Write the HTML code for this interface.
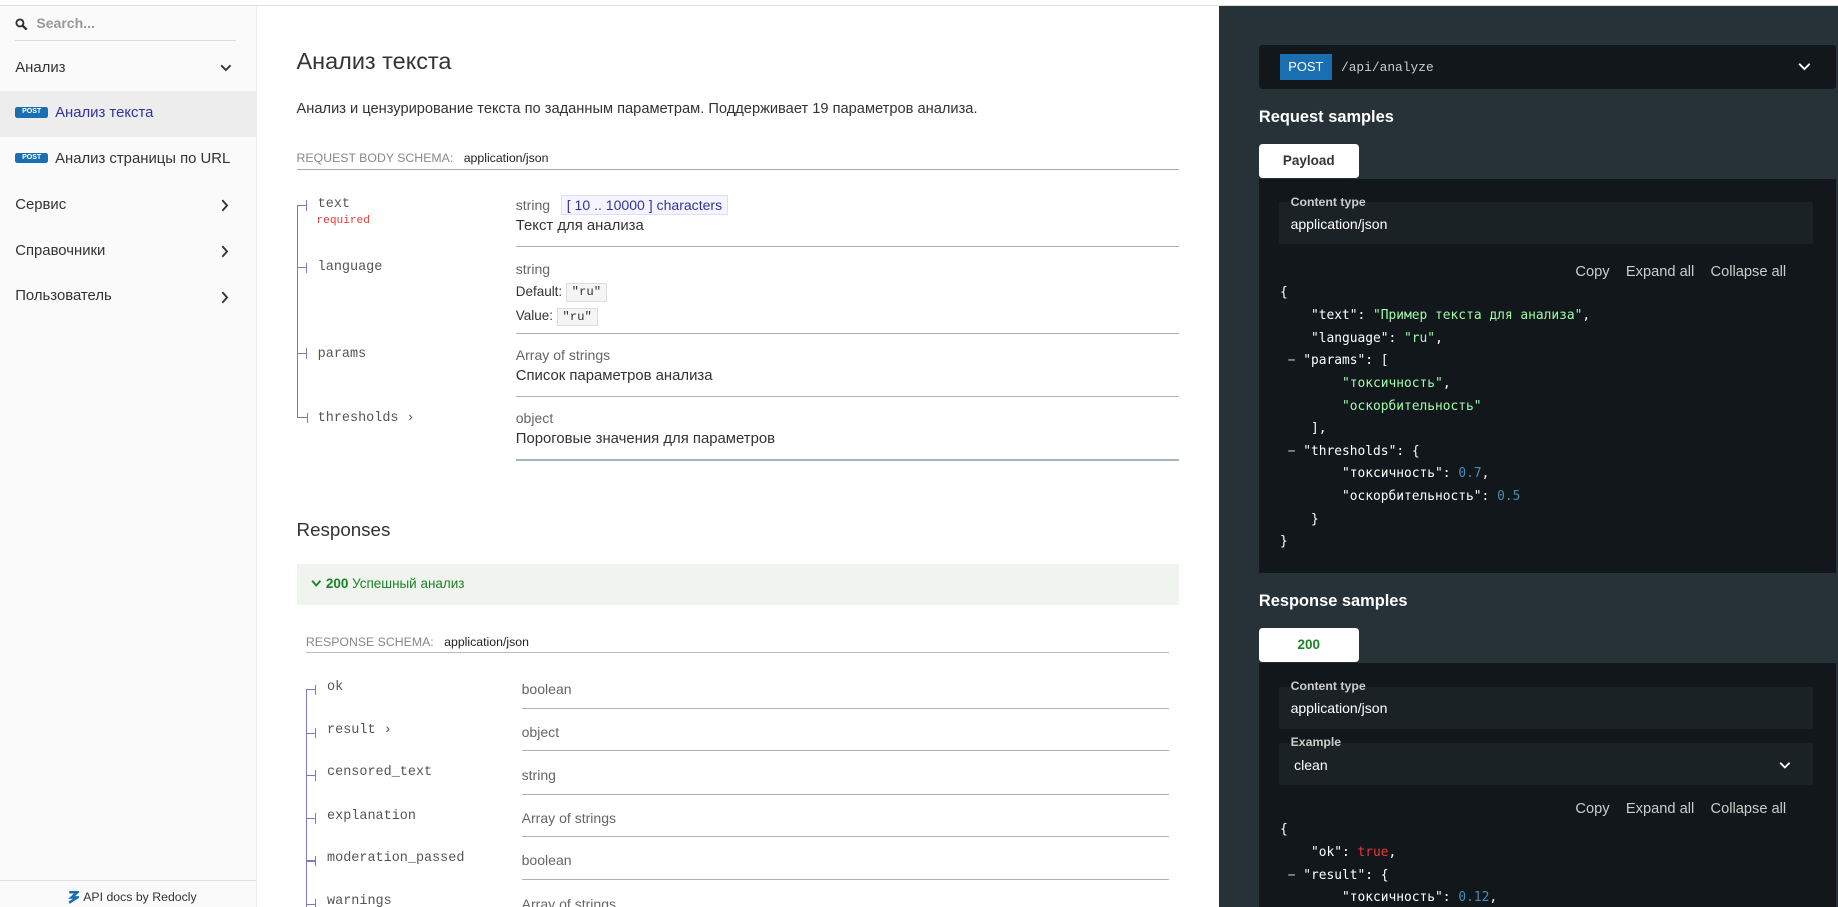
<!DOCTYPE html>
<html><head><meta charset="utf-8"><style>
html,body{margin:0;padding:0;overflow:hidden}
body{width:1568px;height:774px;zoom:1.17219;position:relative;font-family:"Liberation Sans","DejaVu Sans",sans-serif;background:#fff;color:#333}
.a{position:absolute}
.side{left:0;top:5px;width:218px;height:769px;background:#fafafa;border-right:1px solid #eee}
.mi{position:absolute;left:13px;font-size:12.7px;color:#333}
.chev{position:absolute;left:188px}
.post{display:inline-block;background:#1a6fb3;color:#fff;font-size:6px;font-weight:bold;width:28px;height:9px;line-height:9px;text-align:center;border-radius:2px;vertical-align:middle;margin-right:6px;position:relative;top:-1px}
.mid{left:218px;top:5px;width:822px;height:769px}
.mono{font-family:"Liberation Mono",monospace}
.fn{position:absolute;font-family:"Liberation Mono",monospace;font-size:11.5px;color:#555}
.ty{position:absolute;font-size:12px;color:#666}
.ds{position:absolute;font-size:12.7px;color:#333}
.hr{position:absolute;height:1px;background:#a6b3c0}
.tick{position:absolute;width:9px;height:1px;background:#7c7cbb}
.tick:after{content:"";position:absolute;right:0;top:-4px;width:1px;height:9px;background:#7c7cbb}
.right{left:1040px;top:5px;width:528px;height:769px;background:#263238}
.code{position:absolute;font-family:"DejaVu Sans Mono","Liberation Mono",monospace;font-size:11px;color:#fff;white-space:pre;line-height:19.3px}
.s{color:#a0fbaa}.n{color:#4a8bb3}.b{color:#e53935}.p{color:#ccc}
.btns{position:absolute;font-size:12.5px;color:#ccc}
</style></head><body>
<div class="a" style="left:0;top:0;width:1568px;height:4px;border-bottom:1px solid #e0e0e0;background:#fff"></div>

<div class="a side">
 <svg class="a" style="left:13px;top:10px" width="11" height="11" viewBox="0 0 11 11"><circle cx="4.2" cy="4.2" r="3" fill="none" stroke="#333" stroke-width="1.6"/><path d="M6.5 6.5L10 10" stroke="#333" stroke-width="2"/></svg>
 <div class="a" style="left:31px;top:8px;font-size:12px;font-weight:bold;color:#999">Search...</div>
 <div class="a" style="left:13px;top:29px;width:188px;height:1px;background:#ddd"></div>
 <div class="mi" style="top:46px">Анализ</div>
 <svg class="chev" style="top:49px" width="10" height="8" viewBox="0 0 10 8"><path d="M1 2l4 4 4-4" fill="none" stroke="#333" stroke-width="1.6"/></svg>
 <div class="a" style="left:0;top:73px;width:218px;height:39px;background:#ededed"></div>
 <div class="mi" style="top:85px;color:#32329f"><span class="post">POST</span>Анализ текста</div>
 <div class="mi" style="top:124px"><span class="post">POST</span>Анализ страницы по URL</div>
 <div class="mi" style="top:163px">Сервис</div>
 <svg class="chev" style="top:165px" width="8" height="11" viewBox="0 0 8 11"><path d="M2 1l4 4.5L2 10" fill="none" stroke="#333" stroke-width="1.6"/></svg>
 <div class="mi" style="top:202px">Справочники</div>
 <svg class="chev" style="top:204px" width="8" height="11" viewBox="0 0 8 11"><path d="M2 1l4 4.5L2 10" fill="none" stroke="#333" stroke-width="1.6"/></svg>
 <div class="mi" style="top:241px">Пользователь</div>
 <svg class="chev" style="top:243px" width="8" height="11" viewBox="0 0 8 11"><path d="M2 1l4 4.5L2 10" fill="none" stroke="#333" stroke-width="1.6"/></svg>
 <div class="a" style="left:0;top:746px;width:218px;height:1px;background:#e0e0e0"></div>
 <svg class="a" style="left:58px;top:755px" width="9" height="11" viewBox="0 0 9 11"><path d="M1 1h7L3 5.5h5L1 10" fill="none" stroke="#1a6fb3" stroke-width="2.2"/></svg>
 <div class="a" style="left:71px;top:754px;font-size:10.5px;color:#333">API docs by Redocly</div>
</div>

<div class="a mid">
 <div class="a" style="left:35px;top:36px;font-size:20px;color:#333">Анализ текста</div>
 <div class="a" style="left:35px;top:81px;font-size:12.5px;color:#333">Анализ и цензурирование текста по заданным параметрам. Поддерживает 19 параметров анализа.</div>
 <div class="a" style="left:35px;top:124px;font-size:10.5px;color:#888">REQUEST BODY SCHEMA: <span style="color:#222;margin-left:6px">application/json</span></div>
 <div class="a" style="left:35px;top:139px;width:753px;height:1px;background:#aaa"></div>

 <div class="a" style="left:35px;top:170px;width:1px;height:181px;background:#7c7cbb"></div>
 <div class="tick" style="left:35px;top:170px"></div><div class="fn" style="left:53px;top:163px">text</div>
 <div class="a mono" style="left:52px;top:178px;font-size:9.5px;color:#e53935">required</div>
 <div class="ty" style="left:222px;top:163px">string <span style="margin-left:6px;border:1px solid #ddf;background:#f5f5ff;color:#32329f;padding:1px 4px">[ 10 .. 10000 ] characters</span></div>
 <div class="ds" style="left:222px;top:181px">Текст для анализа</div>
 <div class="hr" style="left:222px;top:205px;width:566px"></div>

 <div class="tick" style="left:35px;top:223px"></div><div class="fn" style="left:53px;top:217px">language</div>
 <div class="ty" style="left:222px;top:218px">string</div>
 <div class="ds" style="left:222px;top:237px;font-size:11.5px">Default: <span class="mono" style="font-size:10.5px;background:#f5f5f5;border:1px solid #ddd;padding:1px 4px">"ru"</span></div>
 <div class="ds" style="left:222px;top:258px;font-size:11.5px">Value: <span class="mono" style="font-size:10.5px;background:#f5f5f5;border:1px solid #ddd;padding:1px 4px">"ru"</span></div>
 <div class="hr" style="left:222px;top:279px;width:566px"></div>

 <div class="tick" style="left:35px;top:296px"></div><div class="fn" style="left:53px;top:291px">params</div>
 <div class="ty" style="left:222px;top:291px">Array of strings</div>
 <div class="ds" style="left:222px;top:309px">Список параметров анализа</div>
 <div class="hr" style="left:222px;top:333px;width:566px"></div>

 <div class="a" style="left:35px;top:351px;width:9px;height:1px;background:#7c7cbb"></div>
 <div class="a" style="left:44px;top:347px;width:1px;height:9px;background:#7c7cbb"></div>
 <div class="fn" style="left:53px;top:345px">thresholds <span style="font-size:11px">›</span></div>
 <div class="ty" style="left:222px;top:345px">object</div>
 <div class="ds" style="left:222px;top:363px">Пороговые значения для параметров</div>
 <div class="hr" style="left:222px;top:387px;width:566px"></div>

 <div class="a" style="left:35px;top:438px;font-size:16px;color:#333">Responses</div>
 <div class="a" style="left:35px;top:476px;width:753px;height:35px;background:#eff5ee"></div>
 <svg class="a" style="left:47px;top:489px" width="9" height="7" viewBox="0 0 9 7"><path d="M1 1.5l3.5 4 3.5-4" fill="none" stroke="#1d8127" stroke-width="1.6"/></svg>
 <div class="a" style="left:60px;top:486px;font-size:11.5px;color:#1d8127"><b>200</b> Успешный анализ</div>
 <div class="a" style="left:43px;top:537px;font-size:10.5px;color:#888">RESPONSE SCHEMA: <span style="color:#222;margin-left:6px">application/json</span></div>
 <div class="a" style="left:43px;top:551px;width:736px;height:1px;background:#bbb"></div>

 <div class="a" style="left:43px;top:583px;width:1px;height:186px;background:#7c7cbb"></div>
 <div class="tick" style="left:43px;top:583px"></div><div class="fn" style="left:61px;top:575px">ok</div>
 <div class="ty" style="left:227px;top:576px">boolean</div><div class="hr" style="left:227px;top:599px;width:552px"></div>
 <div class="tick" style="left:43px;top:620px"></div><div class="fn" style="left:61px;top:612px">result <span>›</span></div>
 <div class="ty" style="left:227px;top:613px">object</div><div class="hr" style="left:227px;top:635px;width:552px"></div>
 <div class="tick" style="left:43px;top:656px"></div><div class="fn" style="left:61px;top:648px">censored_text</div>
 <div class="ty" style="left:227px;top:649px">string</div><div class="hr" style="left:227px;top:672px;width:552px"></div>
 <div class="tick" style="left:43px;top:693px"></div><div class="fn" style="left:61px;top:685px">explanation</div>
 <div class="ty" style="left:227px;top:686px">Array of strings</div><div class="hr" style="left:227px;top:708px;width:552px"></div>
 <div class="tick" style="left:43px;top:729px"></div><div class="fn" style="left:61px;top:721px">moderation_passed</div>
 <div class="ty" style="left:227px;top:722px">boolean</div><div class="hr" style="left:227px;top:745px;width:552px"></div>
 <div class="tick" style="left:43px;top:766px"></div><div class="fn" style="left:61px;top:758px">warnings</div>
 <div class="ty" style="left:227px;top:759px">Array of strings</div>
</div>

<div class="a right">
 <div class="a" style="left:34px;top:33px;width:492px;height:38px;background:#11171a;border-radius:3px"></div>
 <div class="a" style="left:52px;top:41px;width:44px;height:22px;background:#1a6fb3;color:#fff;font-size:11px;line-height:22px;text-align:center">POST</div>
 <div class="a mono" style="left:104px;top:46px;font-size:11px;color:#ccc">/api/analyze</div>
 <svg class="a" style="left:494px;top:48px" width="11" height="8" viewBox="0 0 11 8"><path d="M1 1.5l4.5 4.5 4.5-4.5" fill="none" stroke="#fff" stroke-width="1.6"/></svg>

 <div class="a" style="left:34px;top:87px;font-size:14px;font-weight:bold;color:#fff">Request samples</div>
 <div class="a" style="left:34px;top:118px;width:85px;height:29px;background:#fff;border-radius:3px;font-size:11.5px;font-weight:bold;color:#333;text-align:center;line-height:29px">Payload</div>
 <div class="a" style="left:34px;top:148px;width:492px;height:336px;background:#11171a"></div>
 <div class="a" style="left:51px;top:167px;width:456px;height:36px;background:#1b2226"></div>
 <div class="a" style="left:61px;top:161px;font-size:10.5px;font-weight:bold;color:#ccc">Content type</div>
 <div class="a" style="left:61px;top:179px;font-size:12px;color:#fff">application/json</div>
 <div class="btns" style="left:304px;top:220px">Copy &nbsp;&nbsp; Expand all &nbsp;&nbsp; Collapse all</div>
 <div class="code" style="left:52px;top:236px">{
    "text": <span class="s">"Пример текста для анализа"</span>,
    "language": <span class="s">"ru"</span>,
 <span class="p">−</span> "params": [
        <span class="s">"токсичность"</span>,
        <span class="s">"оскорбительность"</span>
    ],
 <span class="p">−</span> "thresholds": {
        "токсичность": <span class="n">0.7</span>,
        "оскорбительность": <span class="n">0.5</span>
    }
}</div>

 <div class="a" style="left:34px;top:500px;font-size:14px;font-weight:bold;color:#fff">Response samples</div>
 <div class="a" style="left:34px;top:531px;width:85px;height:29px;background:#fff;border-radius:3px;font-size:11.5px;font-weight:bold;color:#1d8127;text-align:center;line-height:29px">200</div>
 <div class="a" style="left:34px;top:561px;width:492px;height:208px;background:#11171a"></div>
 <div class="a" style="left:51px;top:581px;width:456px;height:36px;background:#1b2226"></div>
 <div class="a" style="left:61px;top:574px;font-size:10.5px;font-weight:bold;color:#ccc">Content type</div>
 <div class="a" style="left:61px;top:592px;font-size:12px;color:#fff">application/json</div>
 <div class="a" style="left:51px;top:629px;width:456px;height:36px;background:#1b2226"></div>
 <div class="a" style="left:61px;top:622px;font-size:10.5px;font-weight:bold;color:#ccc">Example</div>
 <div class="a" style="left:64px;top:641px;font-size:12px;color:#fff">clean</div>
 <svg class="a" style="left:478px;top:644px" width="10" height="7" viewBox="0 0 10 7"><path d="M1 1.5l4 4 4-4" fill="none" stroke="#fff" stroke-width="1.5"/></svg>
 <div class="btns" style="left:304px;top:678px">Copy &nbsp;&nbsp; Expand all &nbsp;&nbsp; Collapse all</div>
 <div class="code" style="left:52px;top:694px">{
    "ok": <span class="b">true</span>,
 <span class="p">−</span> "result": {
        "токсичность": <span class="n">0.12</span>,</div>
</div>
</body></html>
